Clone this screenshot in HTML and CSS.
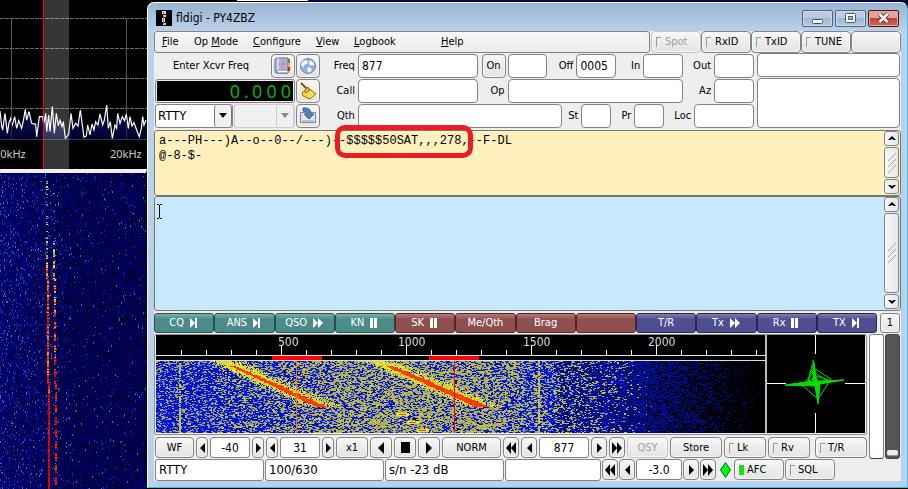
FILE: index.html
```html
<!DOCTYPE html>
<html lang="en">
<head>
<meta charset="utf-8">
<title>fldigi - PY4ZBZ</title>
<link rel="stylesheet" href="styles.css">
</head>
<body>
<svg class="defs" aria-hidden="true">
  <symbol id="left" viewBox="0 0 6 12"><path d="M6 0v12L0 6z"/></symbol>
  <symbol id="right" viewBox="0 0 6 12"><path d="M0 0v12l6-6z"/></symbol>
  <symbol id="rewind" viewBox="0 0 10 12"><path d="M5 0v12L0 6zM10 0v12L5 6z"/></symbol>
  <symbol id="forward" viewBox="0 0 10 12"><path d="M0 0v12l5-6zM5 0v12l5-6z"/></symbol>
  <symbol id="m-next" viewBox="0 0 10 12"><path d="M1 1v10l5-5z"/><path d="M6 1h2v10H6z"/></symbol>
  <symbol id="m-fast" viewBox="0 0 12 12"><path d="M1 1v10l5-5zM6 1v10l5-5z"/></symbol>
  <symbol id="m-pause" viewBox="0 0 10 12"><path d="M1 1h3v10H1zM5 1h3v10H5z"/></symbol>
  <symbol id="up" viewBox="0 0 8 6"><path d="M4 0L0 4h2l2-1 2 1h2z"/></symbol>
  <symbol id="down" viewBox="0 0 8 6"><path d="M4 5L0 1h2l2 1 2-1h2z"/></symbol>
  <symbol id="grip" viewBox="0 0 10 22"><path d="M1 9l8-8M1 15l8-8M1 21l8-8" fill="none" stroke="#a0a0a0"/></symbol>
</svg>

<aside class="sdr">
  <svg class="spectrum" width="147" height="169" role="img" aria-label="Spectrum">
    <defs><linearGradient id="floor" x1="0" y1="0" x2="0" y2="1"><stop offset="0" stop-color="#101a58"/><stop offset="1" stop-color="#00002e"/></linearGradient></defs>
    <g stroke="#6a6a6a" fill="none">
      <path d="M0 18.500H147M0 48.500H147M0 78.500H147M0 108.500H147" stroke-dasharray="4 1"/>
      <path d="M11.500 18V139M126.500 18V139" stroke="#585858"/>
    </g>
    <g transform="scale(.3333)">
      <path fill="url(#floor)" d="M0 417V333L5 378 8 390 15 340 22 400 27 368 32 355 36 378 44 350 50 385 56 362 65 385 70 362 76 328 80 360 87 335 95 370 107 373 110 410 118 350 128 350 131 372 137 340 140 395 146 345 150 395 157 320 163 400 169 340 175 378 180 360 186 380 190 365 196 415 206 403 213 340 219 385 227 370 234 378 241 330 247 375 252 412 259 408 263 375 270 405 276 372 282 390 287 365 294 375 300 342 308 375 313 360 320 315 325 385 331 365 337 415 345 375 350 385 353 340 360 370 367 350 374 362 379 342 385 385 390 350 396 378 402 368 410 390 418 410 424 385 428 350 432 375 438 360V417z"/>
      <path fill="none" stroke="#fff" stroke-width="3.500" d="M0 333L5 378 8 390 15 340 22 400 27 368 32 355 36 378 44 350 50 385 56 362 65 385 70 362 76 328 80 360 87 335 95 370 107 373 110 410 118 350 128 350 131 372 137 340 140 395 146 345 150 395 157 320 163 400 169 340 175 378 180 360 186 380 190 365 196 415 206 403 213 340 219 385 227 370 234 378 241 330 247 375 252 412 259 408 263 375 270 405 276 372 282 390 287 365 294 375 300 342 308 375 313 360 320 315 325 385 331 365 337 415 345 375 350 385 353 340 360 370 367 350 374 362 379 342 385 385 390 350 396 378 402 368 410 390 418 410 424 385 428 350 432 375 438 360"/>
    </g>
    <path d="M0 139.500H147" stroke="#33335c"/>
    <path d="M11.500 120V139M126.500 120V139" stroke="#2c2c55"/>
    <rect x="44" width="25" height="169" fill="#fff" opacity=".21"/>
    <path d="M43.500 0V169" stroke="#f00"/>
    <text x="-6" y="158">10kHz</text>
    <text x="110" y="158">20kHz</text>
  </svg>
  <div class="fall"><canvas id="sdr-fall"></canvas></div>
</aside>

<main class="window">
  <header class="title">
    <svg width="16" height="16" viewBox="0 0 16 16"><path d="M0 0h16v16H0z"/><path d="M6 1h4v3H6zM7 5h3v2H7zM6 8h3v4H6zM7 13h3v2H7z" fill="#ddd"/><path d="M7 2h1v12H7z" fill="#a66"/></svg>
    <h1>fldigi - PY4ZBZ</h1>
    <button class="wb" aria-label="Minimize"><svg width="13" height="12"><rect x="1.500" y="7.500" width="10" height="4" rx="1" fill="#fff" stroke="#46566c"/></svg></button>
    <button class="wb" aria-label="Maximize"><svg width="13" height="12"><rect x="1.500" y="1.500" width="10" height="9" rx="1" fill="#fff" stroke="#46566c"/><path d="M4.500 4.500h4v3h-4z" fill="#9db5d2" stroke="#46566c"/></svg></button>
    <button class="wb close" aria-label="Close"><svg width="13" height="12"><path d="M2.500 2l8 8M10.500 2l-8 8" stroke="#4a3038" stroke-width="4.500"/><path d="M2.500 2l8 8M10.500 2l-8 8" stroke="#fff" stroke-width="2.500"/></svg></button>
  </header>

  <div class="client">
    <div class="menubar">
      <nav>
        <a href="#" class="m-file"><u>F</u>ile</a><a href="#" class="m-op">Op <u>M</u>ode</a><a href="#" class="m-conf"><u>C</u>onfigure</a><a href="#" class="m-view"><u>V</u>iew</a><a href="#" class="m-log"><u>L</u>ogbook</a><a href="#"><u>H</u>elp</a>
      </nav>
      <label class="btn toggle off"><input type="checkbox" disabled>Spot</label>
      <label class="btn toggle"><input type="checkbox">RxID</label>
      <label class="btn toggle"><input type="checkbox">TxID</label>
      <label class="btn toggle"><input type="checkbox">TUNE</label>
      <div class="btn"></div>
    </div>

    <div class="form">
      <section class="rig">
        <div class="row"><span class="rigname">Enter Xcvr Freq</span>
          <button class="btn icon" aria-label="Logbook"><svg width="18" height="18" viewBox="0 0 18 18"><path d="M3 1h11v15H3q-2 0-2-2V3q0-2 2-2z" fill="#a9bce0" stroke="#5a6b91"/><path d="M3 13h11v3H3z" fill="#fff" stroke="#68789a"/><path d="M4 1v12" stroke="#e8eefb"/><circle cx="9" cy="7" r="3.500" fill="#dcd3ea" stroke="#a98bb4"/><circle cx="9" cy="7" r="1.500" fill="none" stroke="#b0506c"/><path d="M14 2h2v4h-2z" fill="#777b36"/><path d="M14 6h2v4h-2z" fill="#f3b51d"/><path d="M14 10h2v4h-2z" fill="#e2201c"/></svg></button>
          <button class="btn icon" aria-label="Web lookup"><svg width="18" height="18" viewBox="0 0 18 18"><circle cx="9" cy="9" r="7.500" fill="#8fb0dc" stroke="#7387a9"/><path d="M3 5l3-2 3 1-1 3-3 1-1 3-2-3zM11 3l4 3v3l-2-1-2 1-1-3zM9 10l3 1 1 2-3 3-2-3z" fill="#f4f8fd"/></svg></button></div>
        <div class="row"><div class="lcd"><output><span>0</span><span class="dot">.</span><span>0</span><span>0</span><span>0</span></output></div>
          <button class="btn icon" aria-label="Clear"><svg width="18" height="18" viewBox="0 0 18 18"><path d="M2 1l6 6" stroke="#8a4a16" stroke-width="2"/><path d="M8 6l4 2 5 4-6 5-7-3-1-3z" fill="#f6d746" stroke="#9a7413"/><path d="M5 9l4-4 2 3-4 3z" fill="#e8b51e" stroke="#9a7413"/><path d="M8 11l4 4M10 9l4 4" stroke="#fff3a0"/></svg></button></div>
        <div class="row">
          <div class="combo"><select class="mode" aria-label="Mode"><option>RTTY</option></select><i><svg width="8" height="5"><path d="M0 0h8L4 5z"/></svg></i></div>
          <div class="combo off"><select aria-label="Bandwidth" disabled><option></option></select><i><svg width="8" height="5"><path d="M0 0h8L4 5z" fill="#888"/></svg></i></div>
          <button class="btn icon" aria-label="Save"><svg width="18" height="18" viewBox="0 0 18 18"><path d="M1.500 5.500h15v10h-15z" fill="#dfe5ec" stroke="#7c8898"/><path d="M3 13h12v2H3z" fill="#b9c2cd"/><path d="M4 1q8-1 8 6h3l-5 5-5-5h3q0-3-4-3z" fill="#4a86b8" stroke="#316794"/></svg></button></div>
      </section>
      <section class="qso">
        <div class="row"><label for="freq">Freq</label><input id="freq" class="w120" value="877"><button class="btn on">On</button><input class="w40" aria-label="Time on"><label for="toff" class="l29">Off</label><input id="toff" class="w40" value="0005"><label for="in" class="l27">In</label><input id="in" class="w40"><label for="out" class="l31">Out</label><input id="out" class="w40"></div>
        <div class="row"><label for="call">Call</label><input id="call" class="w120"><label for="op" class="l30">Op</label><input id="op" class="w176"><label for="az" class="l31">Az</label><input id="az" class="w40"></div>
        <div class="row"><label for="qth">Qth</label><input id="qth" class="w205"><label for="st" class="l19">St</label><input id="st" class="w30"><label for="pr" class="l23">Pr</label><input id="pr" class="w30"><label for="loc" class="l30">Loc</label><input id="loc" class="w60"></div>
      </section>
      <section class="notes"><input aria-label="Country"><textarea aria-label="Notes"></textarea></section>
    </div>

    <div class="pane rx">
      <textarea aria-label="Received text" wrap="off">a---PH---)A--o--0--/---)--$$$$$50SAT,,,278,--F-DL
@-8-$-</textarea>
      <div class="scroll"><button aria-label="Up"><svg width="8" height="6"><use href="#up"/></svg></button><div class="thumb"><svg width="10" height="22"><use href="#grip"/></svg></div><button aria-label="Down"><svg width="8" height="6"><use href="#down"/></svg></button></div>
      <div class="ring"></div>
    </div>
    <div class="pane tx">
      <textarea aria-label="Transmit text"></textarea>
      <div class="scroll"><button aria-label="Up"><svg width="8" height="6"><use href="#up"/></svg></button><div class="thumb"><svg width="10" height="22"><use href="#grip"/></svg></div><button aria-label="Down"><svg width="8" height="6"><use href="#down"/></svg></button></div>
      <svg class="caret" width="6" height="15"><path d="M0 .500h2M3 .500h2M0 14.500h2M3 14.500h2M2.500 1v13" stroke="#000"/></svg>
    </div>

    <div class="macros">
      <button class="g">CQ<svg width="10" height="12"><use href="#m-next"/></svg></button>
      <button class="g">ANS<svg width="10" height="12"><use href="#m-next"/></svg></button>
      <button class="g">QSO<svg width="12" height="12"><use href="#m-fast"/></svg></button>
      <button class="g">KN<svg width="10" height="12"><use href="#m-pause"/></svg></button>
      <button class="r">SK<svg width="10" height="12"><use href="#m-pause"/></svg></button>
      <button class="r">Me/Qth</button>
      <button class="r">Brag</button>
      <button class="r" aria-label="Empty macro"></button>
      <button class="b">T/R</button>
      <button class="b">Tx<svg width="12" height="12"><use href="#m-fast"/></svg></button>
      <button class="b">Rx<svg width="10" height="12"><use href="#m-pause"/></svg></button>
      <button class="b">TX<svg width="10" height="12"><use href="#m-next"/></svg></button>
      <button class="btn bank">1</button>
    </div>

    <div class="lower">
      <div class="lowmain">
        <div class="scope">
          <div class="wf">
            <svg class="scale" width="100%" height="26">
              <g id="ticks" stroke="#fff"></g>
              <text x="122" y="11">500</text><text x="242" y="11">1000</text><text x="367" y="11">1500</text><text x="492" y="11">2000</text>
              <path d="M0 20.500H2000M0 25.500H2000" stroke="#ddd"/>
              <path d="M116 21h50v4h-50zM273 21h50v4h-50z" fill="#f00"/>
            </svg>
            <div class="fall"><canvas id="wf-fall"></canvas></div>
          </div>
          <svg class="phase" width="98" height="98" role="img" aria-label="Phase scope">
            <path d="M48.500 0v19M48.500 78v20M0 48.500h19M78 48.500h20" stroke="#fff"/>
            <g stroke="#00e000" fill="none"><path fill="#00e000" d="M46 25l3 17 2 4 26-1-24 4-2 20-3-18-30-1 28-4z"/><path d="M44 38l4-4 16 10-13 20-16-14 12-13M40 49l4-14 18 12M45 30l-4 18M47 27l4 40M20 51l55-6M36 50l13-9 13 4"/></g>
          </svg>
        </div>
        <div class="bar controls">
          <button class="btn w39">WF</button>
          <span class="spin"><button class="btn w12" aria-label="Less"><svg width="5" height="10"><use href="#left"/></svg></button><input class="n40" value="-40" aria-label="Level"><button class="btn w12" aria-label="More"><svg width="5" height="10"><use href="#right"/></svg></button></span>
          <span class="spin"><button class="btn w12" aria-label="Less"><svg width="5" height="10"><use href="#left"/></svg></button><input class="n40" value="31" aria-label="Range"><button class="btn w12" aria-label="More"><svg width="5" height="10"><use href="#right"/></svg></button></span>
          <button class="btn w32">x1</button>
          <button class="btn w22" aria-label="Back"><svg width="6" height="12"><use href="#left"/></svg></button>
          <button class="btn w22" aria-label="Stop"><svg width="9" height="11"><path d="M0 0h9v11H0z"/></svg></button>
          <button class="btn w22" aria-label="Forward"><svg width="6" height="12"><use href="#right"/></svg></button>
          <button class="btn w59">NORM</button>
          <span class="spin"><button class="btn w16" aria-label="Fast down"><svg width="10" height="12"><use href="#rewind"/></svg></button><button class="btn w16" aria-label="Down"><svg width="5" height="10"><use href="#left"/></svg></button><input class="n50" value="877" aria-label="Audio frequency"><button class="btn w16" aria-label="Up"><svg width="5" height="10"><use href="#right"/></svg></button><button class="btn w16" aria-label="Fast up"><svg width="10" height="12"><use href="#forward"/></svg></button></span>
          <button class="btn w40b off" disabled>QSY</button>
          <button class="btn w52">Store</button>
          <label class="btn toggle w42"><input type="checkbox">Lk</label>
          <label class="btn toggle w42"><input type="checkbox">Rv</label>
          <label class="btn toggle w52 last"><input type="checkbox">T/R</label>
        </div>
      </div>
      <div class="meter"></div>
      <div class="slider"><i></i></div>
    </div>

    <div class="bar status">
      <output class="f109">RTTY</output><output class="f119">100/630</output><output class="f119">s/n -23 dB</output><output class="f96"></output>
      <span class="spin"><button class="btn w16" aria-label="Fast down"><svg width="10" height="12"><use href="#rewind"/></svg></button><button class="btn w16" aria-label="Down"><svg width="5" height="10"><use href="#left"/></svg></button><input class="n46" value="-3.0" aria-label="Squelch"><button class="btn w16" aria-label="Up"><svg width="5" height="10"><use href="#right"/></svg></button><button class="btn w16" aria-label="Fast up"><svg width="10" height="12"><use href="#forward"/></svg></button></span>
      <svg class="lamp" width="11" height="16"><path d="M5.500 .500l5 7.500-5 7.500-5-7.500z" fill="#0f0" stroke="#063"/></svg>
      <label class="btn toggle w50"><input type="checkbox" checked>AFC</label>
      <label class="btn toggle w50"><input type="checkbox">SQL</label>
    </div>
  </div>
</main>
<script src="falls.js"></script>
</body>
</html>
```
FILE: styles.css
```css
* { box-sizing: border-box; }
html, body { height: 100%; }
body {
  margin: 0;
  display: flex;
  background: #000 linear-gradient(90deg, #000 237px, #fff 237px, #fff 308px, #0000a0 308px) no-repeat 0 0 / 100% 1px;
  font: 11px/16px "DejaVu Sans Condensed", "DejaVu Sans", sans-serif;
  color: #000;
  overflow: hidden;
}
button, input, select, textarea { font: inherit; color: inherit; margin: 0; padding: 0; border: 0; border-radius: 0; background: none; min-width: 0; }
button { cursor: pointer; }
svg { display: block; flex: none; }
.defs { position: absolute; width: 0; height: 0; }

/* receiver behind the window */
.sdr { width: 147px; flex: none; display: flex; flex-direction: column; }
.spectrum text { fill: #c8c8c8; font: 11px "Noto Sans", sans-serif; }
.fall { position: relative; flex: 1; min-height: 0; }
.fall canvas { position: absolute; inset: 0; width: 100%; height: 100%; image-rendering: pixelated; }
.sdr .fall { border-top: 4px solid #f4eef4; border-right: 1px solid #000; }

/* window frame */
.window {
  flex: 1; min-width: 0; margin: 2px 0 1px; padding: 0 6px 6px;
  display: flex; flex-direction: column;
  border: 1px solid #fff; border-right-color: #35c6e8; border-bottom-color: #22c8e8;
  border-radius: 7px 7px 0 0;
  background: linear-gradient(#99b4d1, #b9d1ea 28px);
}
.title { height: 28px; display: flex; align-items: center; gap: 2px; padding: 2px 2px 0 0; flex: none; }
.title h1 { margin: 0 auto 0 2px; font-size: 12px; font-weight: 400; }
.title > svg { margin-left: 2px; }
.wb { width: 31px; height: 17px; display: grid; place-items: center; border: 1px solid #50667f; border-radius: 2px; background: linear-gradient(#b8cde4 45%, #9db7d3 50%, #b4cbe4); box-shadow: inset 0 0 0 1px #c9dbee; }
.wb.close { background: linear-gradient(#e2a398 45%, #c04530 50%, #cf6a52); border-color: #471418; box-shadow: inset 0 0 0 1px #e3a99f; }
.client { flex: 1; min-height: 0; display: flex; flex-direction: column; background: #eee; }

.btn {
  display: flex; align-items: center; justify-content: center;
  border: 1px solid #828282; border-radius: 4px;
  background: linear-gradient(#f8f8f8, #ececec 50%, #e4e4e4);
  box-shadow: inset 0 0 0 1px #f6f6f6;
}
.off { color: #a0a0a0; border-color: #c4c4c4; }
.toggle { justify-content: flex-start; gap: 3px; padding-left: 4px; }
.toggle input { appearance: none; width: 5px; height: 10px; border: 1px solid #999; border-width: 1px 0 0 1px; }
.toggle input:checked { background: #0e0; border-color: #6a6; }

/* menu */
.menubar { display: flex; height: 22px; flex: none; }
.menubar nav { flex: 1; display: flex; align-items: center; padding-left: 7px; margin-right: 1px; border: 1px solid #828282; border-radius: 3px; background: linear-gradient(#f6f6f6, #ececec); }
.menubar a { color: #000; text-decoration: none; }
.menubar u { text-underline-offset: 1px; }
.m-file { width: 32px; } .m-op { width: 59px; } .m-conf { width: 63px; } .m-view { width: 38px; } .m-log { width: 87px; }
.menubar .btn { width: 50px; }
.menubar .toggle { gap: 4px; }

/* log fields */
.form { display: flex; padding-bottom: 2px; flex: none; }
.row { display: flex; height: 25px; align-items: center; gap: 2px; }
.rig { width: 166px; padding-left: 1px; }
.rig .row { gap: 1px; }
.rigname { flex: 1; text-align: center; padding-right: 3px; }
.icon { width: 24px; height: 24px; flex: none; }
.lcd { flex: 1; height: 24px; padding: 1px; border: 1px solid #828282; border-radius: 3px; background: #eee; }
.lcd output { display: flex; justify-content: flex-end; align-items: center; gap: 4px; height: 20px; padding-right: 2px; background: #000; color: #00b400; font: 18px "Noto Sans", sans-serif; }
.lcd .dot { width: 4px; }
.combo { display: flex; height: 24px; width: 78px; border: 1px solid #828282; border-radius: 3px; background: #fff; }
.combo select { appearance: none; flex: 1; padding-left: 2px; opacity: 1; font-size: 13px; }
.combo i { width: 18px; display: grid; place-items: center; border: 1px solid #777; border-width: 0 1px 0 1px; border-radius: 3px; background: #f0f0f0; }
.combo.off { width: 61px; background: #f0f0f0; border-color: #ccc; }
.combo.off i { border-color: #ccc; }

.form input, .notes textarea { height: 24px; padding: 0 3px; border: 1px solid #828282; border-radius: 4px; background: #fff; font-size: 12px; }
.qso { width: 434px; }
.qso label { width: 35px; text-align: right; margin: 0 1px 0 0; }
.qso .w120 { width: 120px; } .qso .w40 { width: 40px; } .qso .w176 { width: 176px; }
.qso .w205 { width: 205px; } .qso .w30 { width: 30px; } .qso .w60 { width: 60px; }
.qso .l29 { width: 24px; } .qso .l27 { width: 22px; } .qso .l31 { width: 26px; }
.qso .l30 { width: 25px; } .qso .l19 { width: 14px; } .qso .l23 { width: 18px; }
.qso .on { width: 24px; height: 24px; margin-left: 2px; }
.notes { flex: 1; margin-left: 3px; padding-right: 1px; display: flex; flex-direction: column; gap: 1px; }
.notes input { width: 100%; }
.notes textarea { flex: 1; resize: none; }

/* text panes */
.pane { position: relative; display: flex; padding: 0 1px; border: 1px solid #77776a; border-radius: 3px; }
.pane textarea { flex: 1; padding: 3px; border: 0; outline: 0; resize: none; overflow: hidden; white-space: pre; font: 12px/15px "Liberation Mono", monospace; }
.rx { height: 66px; flex: none; background: #fff0be; }
.tx { flex: 1; min-height: 40px; background: #c8eaff; }
.scroll { width: 15px; display: flex; flex-direction: column; gap: 1px; padding-bottom: 1px; }
.scroll > * { display: grid; place-items: center; border: 1px solid #828282; border-radius: 3px; background: linear-gradient(90deg, #f8f8f8, #e6e6e6); }
.scroll button { height: 15px; }
.scroll .thumb { flex: 1; }
.ring { position: absolute; left: 180px; top: -6px; width: 138px; height: 33px; border: 5px solid #ed1c24; border-radius: 10px; }
.caret { position: absolute; left: 2px; top: 7px; }

/* macro keys */
.macros { display: flex; height: 20px; margin: 2px 0 1px; flex: none; }
.macros button { flex: 1; display: flex; align-items: center; justify-content: center; gap: 5px; border: 1px solid; border-radius: 3px; color: #fff; }
.macros svg { fill: #fff; }
.macros .g { background: linear-gradient(#7aaeac, #4b8c8a 30%, #4b8c8a); border-color: #274f4e; }
.macros .r { background: linear-gradient(#b07c7c, #8f4f4f 30%, #8f4f4f); border-color: #522626; }
.macros .b { background: linear-gradient(#7d7db0, #4e4e90 30%, #4e4e90); border-color: #26264e; }
.macros .bank { flex: none; width: 20px; margin: 0 1px 0 3px; color: #000; border-color: #828282; }

/* waterfall and meters */
.lower { display: flex; height: 125px; flex: none; }
.lowmain { flex: 1; min-width: 0; display: flex; flex-direction: column; }
.scope { display: flex; height: 101px; border: 1px solid #909090; padding: 0 1px 1px; border-radius: 2px; }
.wf { flex: 1; min-width: 0; display: flex; flex-direction: column; border-right: 2px solid #bbb; background: #000; }
.scale text { fill: #ddd; font: 12px "DejaVu Sans Condensed", "DejaVu Sans", sans-serif; }
.phase { background: #000; }
.meter { width: 15px; margin-left: 2px; border: 1px solid #828282; border-bottom-color: #060; border-radius: 3px; background: #fff; }
.slider { width: 15px; margin: 0 1px; display: flex; align-items: flex-end; justify-content: center; padding-bottom: 2px; border: 1px solid #444; border-radius: 3px; background: #555; }
.slider i { width: 11px; height: 6px; border-radius: 2px; background: #eee; border-bottom: 1px solid #999; }

/* control rows */
.bar { display: flex; gap: 2px; }
.bar > *, .spin > * { height: 21px; flex: none; }
.controls { padding: 2px 0 0 1px; }
.spin { display: flex; gap: 2px; }
.bar input:not([type]) { height: 21px; border: 1px solid #828282; border-radius: 3px; background: #fff; text-align: center; font-size: 12px; }
.w12 { width: 12px; } .w16 { width: 16px; } .w22 { width: 22px; } .w32 { width: 32px; } .w39 { width: 39px; }
.w40b { width: 41px; } .w42 { width: 42px; } .w50 { width: 50px; } .w52 { width: 52px; } .w59 { width: 59px; }
.n40 { width: 40px; } .n46 { width: 46px; } .n50 { width: 50px; }
.bar .last { margin-left: auto; }
.status { padding-left: 1px; gap: 1px; height: 22px; flex: none; }
.status .spin { gap: 1px; }
.status output { display: flex; align-items: center; height: 22px; padding-left: 3px; border: 1px solid #828282; border-radius: 3px; background: #fff; font-size: 13px; }
.f109 { width: 109px; } .f119 { width: 119px; } .f96 { width: 96px; }
.status .lamp { height: 16px; margin: 3px 2px 0 3px; }
```
FILE: falls.js
```js
// Small seeded generator so the noise is the same on every load.
function rng(seed) {
  return function () {
    seed = (seed * 1664525 + 1013904223) >>> 0;
    return seed / 4294967296;
  };
}

function fit(canvas) {
  canvas.width = canvas.clientWidth;
  canvas.height = canvas.clientHeight;
  return canvas.getContext('2d');
}

function drawSdr() {
  var c = document.getElementById('sdr-fall'), g = fit(c), r = rng(7);
  var x, y;
  for (y = 0; y < c.height; y++) {
    for (x = 0; x < c.width; x++) {
      var near = Math.max(0, 1 - x / 75), v = r(), b = 38 + v * v * 120 + near * 25;
      g.fillStyle = 'rgb(0,0,' + Math.round(b) + ')';
      g.fillRect(x, y, 1, 1);
    }
  }
  for (y = 0; y < c.height; y++) {
    for (x = 0; x < c.width; x++) {
      if (r() < 0.014 + Math.max(0, 1 - x / 75) * 0.06) {
        g.fillStyle = r() < 0.35 ? '#1e78d2' : '#0c38b4';
        g.fillRect(x, y, 1, r() < 0.5 ? 2 : 1);
      }
    }
  }
  var hot = ['#c80000', '#e00000', '#ff2800', '#f0a020'], warm = ['#f0e020', '#e8a020', '#38a0c8', '#c0d848'];
  for (y = 0; y < c.height; y++) {
    var t = y / c.height;
    var p1 = t < 0.2 ? 0.25 : t < 0.3 ? 0.7 : 1;
    if (r() < p1) {
      var set = r() < (t - 0.2) * 5 ? hot : warm;
      g.fillStyle = set[Math.floor(r() * (t > 0.7 ? 2 : 4))];
      g.fillRect(Math.round(45.5 + t * 3), y, 2, 1);
    }
    if (r() < 0.4) { g.fillStyle = '#2a8cd0'; g.fillRect(Math.round(44 + t * 4 + r() * 12), y, 1, 1); }
    var dash = Math.floor(y / 4) % 3 !== 0;
    if (dash && (t > 0.22 || r() < 0.2)) {
      g.fillStyle = (r() < (t - 0.25) * 4 ? hot : warm)[Math.floor(r() * (t > 0.6 ? 3 : 4))];
      g.fillRect(Math.round(52.5 + t * 3), y, 2, 1);
    }
  }
}

function drawWaterfall() {
  var c = document.getElementById('wf-fall'), g = fit(c), r = rng(42);
  var x, y, w;
  function pick(a) { return a[Math.floor(r() * a.length)]; }
  // Share of yellow cells as the audio frequency rises.
  function density(x) {
    if (x < 60) return 0.3;
    if (x < 200) return 0.3 + (x - 60) / 140 * 0.35;
    if (x < 320) return 0.66;
    if (x < 440) return 0.66 - (x - 320) / 120 * 0.46;
    return Math.max(0, 0.2 - (x - 440) / 60 * 0.2);
  }
  for (y = 0; y < c.height; y++) {
    for (x = 0; x < c.width; x += w) {
      w = r() < 0.6 ? 2 : 1;
      if (r() < density(x)) {
        g.fillStyle = pick(x < 60 ? ['#a8a868', '#98987c', '#b4b44c'] : ['#c4c43c', '#b4b44c', '#bcbc44', '#98987c']);
      } else if (x < 400) {
        g.fillStyle = pick(['#0018f0', '#0010d0', '#0824ff', '#0008a8', '#0018e0']);
      } else {
        var fade = Math.max(0, 1 - (x - 400) / 200);
        var b = r() < Math.min(1, fade * 1.7) ? 60 + r() * 190 * Math.min(1, fade + 0.15) : 0;
        g.fillStyle = 'rgb(0,' + Math.round(b * 0.1) + ',' + Math.round(b) + ')';
      }
      g.fillRect(x, y, w, r() < 0.4 ? 2 : 1);
    }
  }
  [[65, 166, 3], [221, 326, 5]].forEach(function (s) {
    for (var y = 0; y < 46; y++) {
      var mid = s[0] + (s[1] - s[0]) * y / 46;
      for (var x = Math.floor(mid - 18); x < mid + 26; x++) {
        var off = x - mid;
        var p = off < 0 ? 1.3 + off / 14 : 1.3 - off / 20;
        if (r() < p) { g.fillStyle = pick(['#f4f41c', '#e0e02c', '#d0d038', '#c8c840']); g.fillRect(x, y, 1, 1); }
      }
      if (y > 4) {
        g.fillStyle = '#ff3c00';
        var w = s[2] + y / 6;
        g.fillRect(Math.round(mid - w / 2 + r() * 2), y, Math.round(w + r() * 3), 1);
      }
    }
  });
  for (y = 0; y < c.height; y++) {
    g.fillStyle = '#c4c43c';
    if (y > 46 || r() < 0.5) g.fillRect(23, y, 2, 1);
    if (r() < 0.85) g.fillRect(382, y, 2, 1);
  }
  [[243, 53], [253, 61], [263, 69]].forEach(function (m) {
    g.fillStyle = '#e8e828'; g.fillRect(m[0] - 2, m[1] - 1, 12, 3);
    g.fillStyle = '#ff3c00'; g.fillRect(m[0], m[1], 7, 1);
  });
  g.fillStyle = '#ff7800'; g.fillRect(140, 0, 1, c.height);
  g.fillStyle = '#ff0000'; g.fillRect(298, 0, 1, c.height);
}

function drawTicks() {
  var d = '';
  for (var i = 1; i < 80; i++) d += 'M' + (i * 25 + 0.5) + ' ' + (i % 5 ? 15 : 10) + 'V20';
  document.getElementById('ticks').innerHTML = '<path d="' + d + '"/>';
}

drawSdr();
drawTicks();
drawWaterfall();
```
